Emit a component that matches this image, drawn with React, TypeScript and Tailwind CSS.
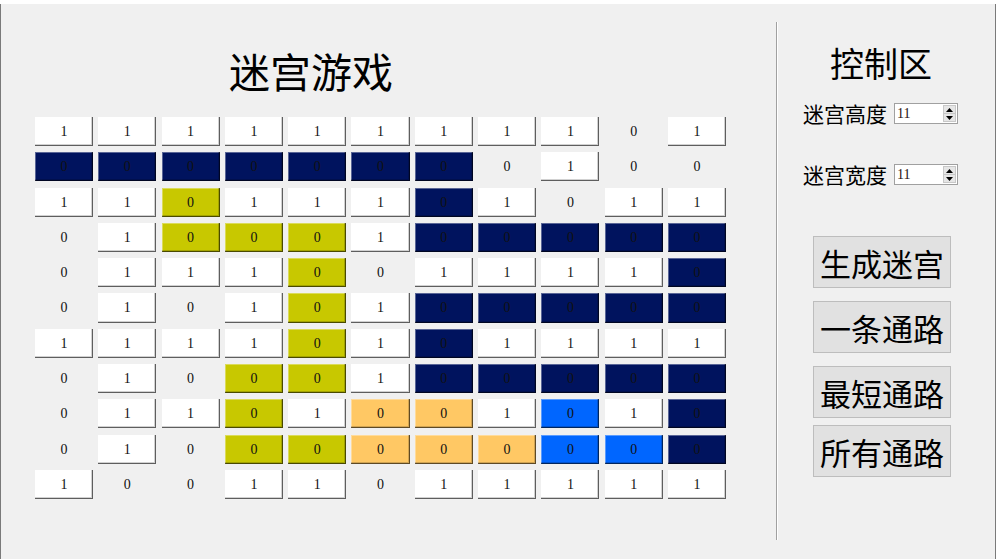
import React from "react";

const GRID: string[] = [
  "w w w w w w w w w p w",
  "N N N N N N N p w p p",
  "w w Y w w w N w p w w",
  "p w Y Y Y w N N N N N",
  "p w w w Y p w w w w N",
  "p w p w Y w N N N N N",
  "w w w w Y w N w w w w",
  "p w p Y Y w N N N N N",
  "p w w Y w O O w B w N",
  "p w p Y Y O O O B B N",
  "w p p w w p w w w w w",
];

const cjk = { fontFamily: '"Noto Sans CJK SC", "Noto Sans", sans-serif' };
const serif = { fontFamily: '"Liberation Serif", "DejaVu Serif", serif' };

function Cell({ t }: { t: string }) {
  const raised =
    "shadow-[inset_-1px_-1px_0_rgba(0,0,0,0.55),inset_-2px_-2px_0_rgba(0,0,0,0.18),inset_1px_1px_0_rgba(255,255,255,0.35)]";
  if (t === "p") {
    return (
      <div className="flex items-center justify-center text-[14px] text-[#111]" style={serif}>
        0
      </div>
    );
  }
  let bg = "bg-white";
  let val = "0";
  if (t === "w") val = "1";
  if (t === "N") bg = "bg-[#00135e]";
  if (t === "Y") bg = "bg-[#c8c800]";
  if (t === "O") bg = "bg-[#ffc864]";
  if (t === "B") bg = "bg-[#0066ff]";
  return (
    <div
      className={`flex items-center justify-center text-[14px] text-[#111] ${bg} ${raised}`}
      style={serif}
    >
      {val}
    </div>
  );
}

function SpinBox() {
  return (
    <div className="ml-[7px] flex h-[21px] w-[64px] border border-[#a0a0a0] bg-white">
      <div className="flex flex-1 items-center pl-[2px] text-[14px] leading-none text-[#2a1010]" style={serif}>
        11
      </div>
      <div className="flex w-[14px] flex-col py-[1px] pr-[1px]">
        <div className="flex flex-1 items-center justify-center border border-[#c8c8c8] bg-[#e6e6e6]">
          <svg width="7" height="4" viewBox="0 0 7 4">
            <polygon points="0,4 7,4 3.5,0" fill="#000" />
          </svg>
        </div>
        <div className="flex flex-1 items-center justify-center border border-t-0 border-[#c8c8c8] bg-[#e6e6e6]">
          <svg width="7" height="4" viewBox="0 0 7 4">
            <polygon points="0,0 7,0 3.5,4" fill="#000" />
          </svg>
        </div>
      </div>
    </div>
  );
}

function Btn({ label, mt }: { label: string; mt: string }) {
  return (
    <div
      className={`${mt} ml-[35px] flex h-[52px] w-[138px] items-center justify-center border border-[#bdbdbd] bg-[#e1e1e1] text-[31px] leading-none text-black`}
      style={cjk}
    >
      {label}
    </div>
  );
}

export default function App() {
  return (
    <div className="h-[559px] w-[996px] overflow-hidden bg-white">
      <div className="mt-[4px] flex h-[555px] w-[996px] border-l border-r border-[#7a7a7a] bg-[#f0f0f0]">
        {/* left area */}
        <div className="flex w-[775px] flex-col">
          <div
            className="mt-[41px] h-[50px] w-[620px] text-center text-[41px] leading-[50px] text-black"
            style={cjk}
          >
            迷宫游戏
          </div>
          <div className="ml-[34px] mt-[22px] grid h-[382px] w-[691px] grid-cols-11 grid-rows-11 gap-x-[5.3px] gap-y-[6.3px]">
            {GRID.flatMap((row, r) =>
              row.split(" ").map((t, c) => <Cell key={`${r}-${c}`} t={t} />)
            )}
          </div>
        </div>
        {/* separator */}
        <div className="mt-[18px] h-[518px] w-[2px] border-l border-[#a0a0a0] bg-white" />
        {/* right panel */}
        <div className="flex flex-1 flex-col">
          <div className="mt-[39px] h-[40px] w-[206px] text-center text-[34px] leading-[40px] text-black" style={cjk}>
            控制区
          </div>
          <div className="ml-[25px] mt-[20px] flex h-[21px] items-center">
            <span className="text-[21px] leading-none text-black" style={cjk}>
              迷宫高度
            </span>
            <SpinBox />
          </div>
          <div className="ml-[25px] mt-[40px] flex h-[21px] items-center">
            <span className="text-[21px] leading-none text-black" style={cjk}>
              迷宫宽度
            </span>
            <SpinBox />
          </div>
          <Btn label="生成迷宫" mt="mt-[51px]" />
          <Btn label="一条通路" mt="mt-[13px]" />
          <Btn label="最短通路" mt="mt-[13px]" />
          <Btn label="所有通路" mt="mt-[7px]" />
        </div>
      </div>
    </div>
  );
}
